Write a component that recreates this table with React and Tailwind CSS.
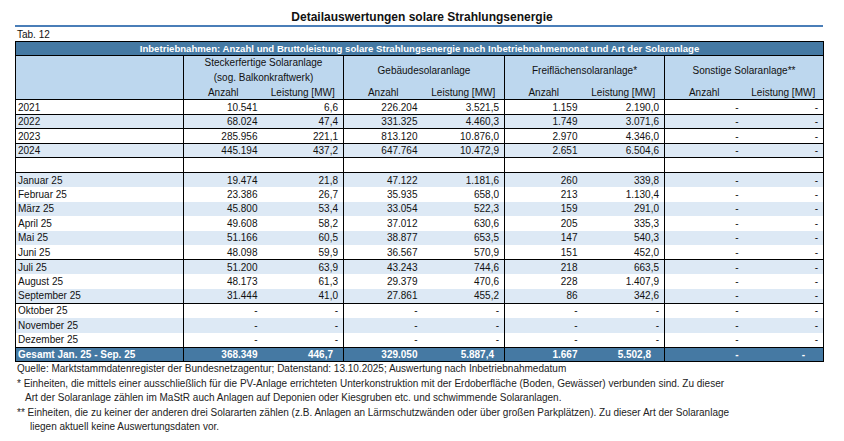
import React from "react";

const years = [
  ["2021", "10.541", "6,6", "226.204", "3.521,5", "1.159", "2.190,0"],
  ["2022", "68.024", "47,4", "331.325", "4.460,3", "1.749", "3.071,6"],
  ["2023", "285.956", "221,1", "813.120", "10.876,0", "2.970", "4.346,0"],
  ["2024", "445.194", "437,2", "647.764", "10.472,9", "2.651", "6.504,6"],
];

const g1 = [
  ["Januar 25", "19.474", "21,8", "47.122", "1.181,6", "260", "339,8"],
  ["Februar 25", "23.386", "26,7", "35.935", "658,0", "213", "1.130,4"],
  ["März 25", "45.800", "53,4", "33.054", "522,3", "159", "291,0"],
  ["April 25", "49.608", "58,2", "37.012", "630,6", "205", "335,3"],
  ["Mai 25", "51.166", "60,5", "38.877", "653,5", "147", "540,3"],
  ["Juni 25", "48.098", "59,9", "36.567", "570,9", "151", "452,0"],
];
const g2 = [
  ["Juli 25", "51.200", "63,9", "43.243", "744,6", "218", "663,5"],
  ["August 25", "48.173", "61,3", "29.379", "470,6", "228", "1.407,9"],
  ["September 25", "31.444", "41,0", "27.861", "455,2", "86", "342,6"],
];
const g3 = [
  ["Oktober 25", "-", "-", "-", "-", "-", "-"],
  ["November 25", "-", "-", "-", "-", "-", "-"],
  ["Dezember 25", "-", "-", "-", "-", "-", "-"],
];

const font = { fontFamily: '"Liberation Sans", Arial, sans-serif' };

function Row({ r, shade, topBorder }) {
  const bg = shade ? "bg-[#dde9f5]" : "bg-white";
  const tb = topBorder ? "border-t border-t-black" : "";
  const cells = [...r.slice(1), "-", "-"];
  const grpBorder = [false, true, false, true, false, true, false, false];
  return (
    <tr className={`${bg} ${tb} h-[14.55px]`}>
      <td className="pl-[2px] border-r border-black">{r[0]}</td>
      {cells.map((c, i) => (
        <td
          key={i}
          className={`text-right pr-[5px] ${grpBorder[i] ? "border-r border-black" : ""}`}
        >
          {c}
        </td>
      ))}
    </tr>
  );
}

export default function App() {
  return (
    <div
      className="w-[844px] h-[441px] bg-white text-[#111] overflow-hidden"
      style={font}
    >
      <div className="pt-[10px] text-center font-bold text-[12px] leading-[15px]">
        Detailauswertungen solare Strahlungsenergie
      </div>
      <div className="ml-[15px] w-[808px] h-[2px] bg-[#4a7eb8]" />
      <div className="ml-[17px] mt-[1px] text-[10px] leading-[13px]">Tab. 12</div>
      <table className="ml-[15px] w-[808px] table-fixed border-collapse border border-black text-[10px] leading-[13px]">
        <colgroup>
          <col className="w-[168px]" />
          <col className="w-[79px]" />
          <col className="w-[81px]" />
          <col className="w-[79px]" />
          <col className="w-[82px]" />
          <col className="w-[78px]" />
          <col className="w-[82px]" />
          <col className="w-[79px]" />
          <col className="w-[80px]" />
        </colgroup>
        <thead>
          <tr className="bg-[#4579a3] text-white font-bold h-[14.3px] border-b border-black">
            <th colSpan={9} className="font-bold text-center text-[9.6px]">
              Inbetriebnahmen: Anzahl und Bruttoleistung solare Strahlungsenergie nach Inbetriebnahmemonat und Art der Solaranlage
            </th>
          </tr>
          <tr className="bg-[#bdd7ee] h-[29px]">
            <th rowSpan={2} className="border-r border-black" />
            <th colSpan={2} className="font-normal text-center border-r border-black leading-[14.5px]">
              Steckerfertige Solaranlage
              <br />
              (sog. Balkonkraftwerk)
            </th>
            <th colSpan={2} className="font-normal text-center border-r border-black">
              Gebäudesolaranlage
            </th>
            <th colSpan={2} className="font-normal text-center border-r border-black">
              Freiflächensolaranlage*
            </th>
            <th colSpan={2} className="font-normal text-center">
              Sonstige Solaranlage**
            </th>
          </tr>
          <tr className="bg-[#bdd7ee] h-[14.5px] border-b border-black">
            <th className="font-normal text-center">Anzahl</th>
            <th className="font-normal text-center border-r border-black">Leistung [MW]</th>
            <th className="font-normal text-center">Anzahl</th>
            <th className="font-normal text-center border-r border-black">Leistung [MW]</th>
            <th className="font-normal text-center">Anzahl</th>
            <th className="font-normal text-center border-r border-black">Leistung [MW]</th>
            <th className="font-normal text-center">Anzahl</th>
            <th className="font-normal text-center">Leistung [MW]</th>
          </tr>
        </thead>
        <tbody>
          {years.map((r, i) => (
            <Row key={r[0]} r={r} shade={i % 2 === 1} topBorder={i > 0} />
          ))}
          <tr className="h-[14.55px] border-t border-black bg-white">
            <td className="border-r border-black" />
            <td />
            <td className="border-r border-black" />
            <td />
            <td className="border-r border-black" />
            <td />
            <td className="border-r border-black" />
            <td />
            <td />
          </tr>
          {g1.map((r, i) => (
            <Row key={r[0]} r={r} shade={i % 2 === 0} topBorder={i === 0} />
          ))}
          {g2.map((r, i) => (
            <Row key={r[0]} r={r} shade={i % 2 === 0} topBorder={i === 0} />
          ))}
          {g3.map((r, i) => (
            <Row key={r[0]} r={r} shade={i % 2 === 1} topBorder={i === 0} />
          ))}
          <tr className="h-[14.7px] bg-[#4579a3] text-white font-bold border-t border-black">
            <td className="pl-[2px] border-r border-black">Gesamt Jan. 25 - Sep. 25</td>
            <td className="text-right pr-[5px]">368.349</td>
            <td className="text-right pr-[10px] border-r border-black">446,7</td>
            <td className="text-right pr-[5px]">329.050</td>
            <td className="text-right pr-[10px] border-r border-black">5.887,4</td>
            <td className="text-right pr-[5px]">1.667</td>
            <td className="text-right pr-[13px] border-r border-black">5.502,8</td>
            <td className="text-right pr-[5px]">-</td>
            <td className="text-right pr-[18px]">-</td>
          </tr>
        </tbody>
      </table>
      <div className="ml-[17px] text-[10px] leading-[14.5px] text-[#222]">
        <div>Quelle: Marktstammdatenregister der Bundesnetzagentur; Datenstand: 13.10.2025; Auswertung nach Inbetriebnahmedatum</div>
        <div>* Einheiten, die mittels einer ausschließlich für die PV-Anlage errichteten Unterkonstruktion mit der Erdoberfläche (Boden, Gewässer) verbunden sind. Zu dieser</div>
        <div className="pl-[8px]">Art der Solaranlage zählen im MaStR auch Anlagen auf Deponien oder Kiesgruben etc. und schwimmende Solaranlagen.</div>
        <div>** Einheiten, die zu keiner der anderen drei Solararten zählen (z.B. Anlagen an Lärmschutzwänden oder über großen Parkplätzen). Zu dieser Art der Solaranlage</div>
        <div className="pl-[13px]">liegen aktuell keine Auswertungsdaten vor.</div>
      </div>
    </div>
  );
}
